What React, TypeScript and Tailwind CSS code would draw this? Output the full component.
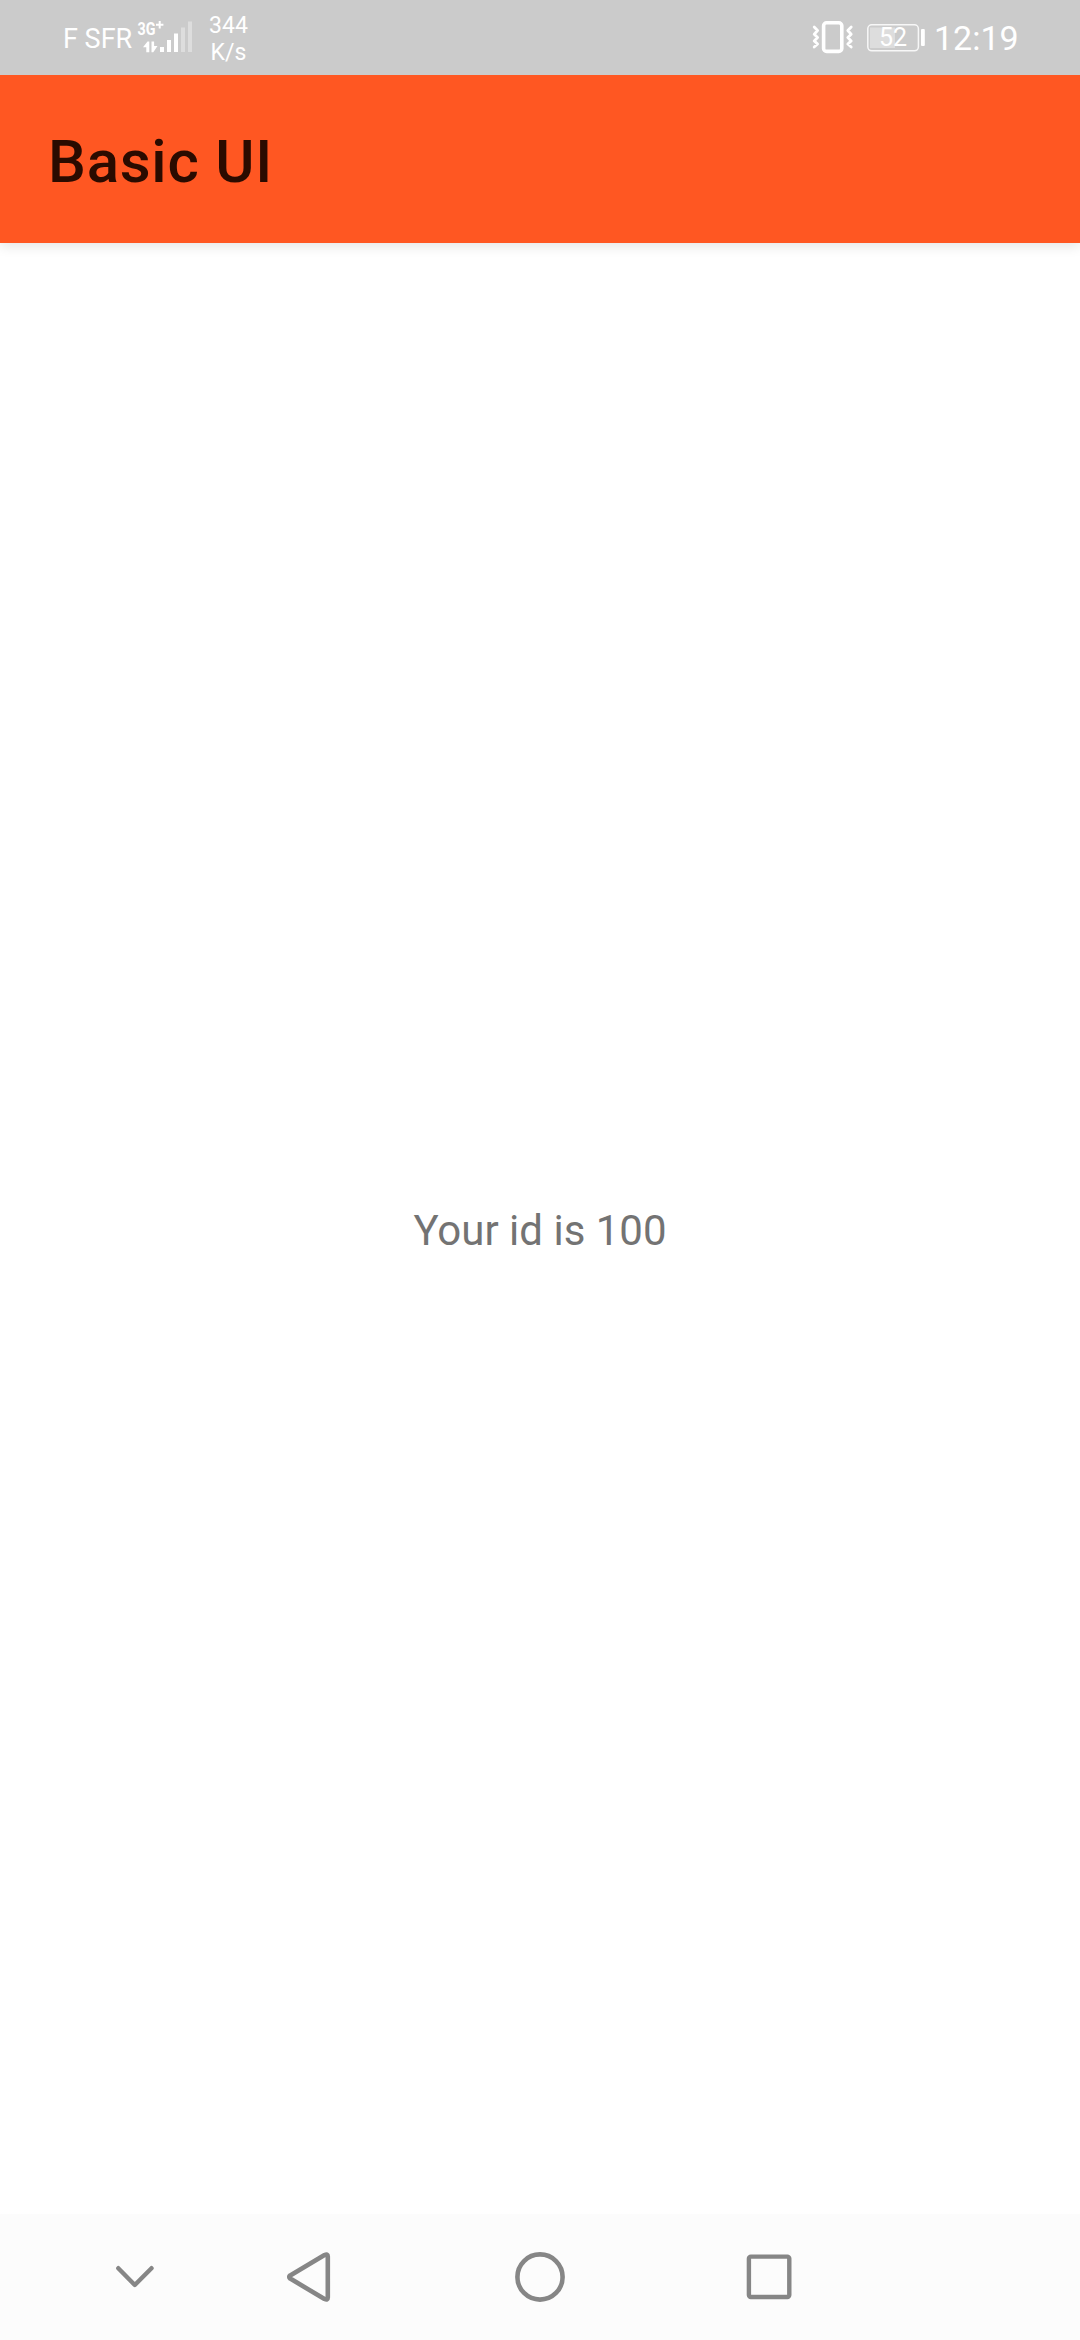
function CellularSignal() {
  return (
    <svg className="ml-[3px] h-[75px] w-[62px] shrink-0" viewBox="136 0 62 75" fill="#fff">
      <text x="137.5" y="35" fontFamily="Roboto, sans-serif" fontSize="18" fontWeight="700" textLength="18" lengthAdjust="spacingAndGlyphs">3G</text>
      <path d="M159.7 21v7.4M156 24.7h7.4" stroke="#fff" strokeWidth="2" />
      <path d="M149.3 41.5h-1.8l-4.5 5.8h3.3v5h3zM151.5 41.5h2.6v4.6h3.4l-4.2 6.2h-1.8z" />
      <path d="M160 47h4v5h-4zM167 40h4v12h-4zM174 33.5h4v18.5h-4z" />
      <path d="M181 27.5h4v24.5h-4zM188 21.5h4v30.5h-4z" fillOpacity=".35" />
    </svg>
  );
}

function VibrateIcon() {
  return (
    <svg className="h-[75px] w-[48px] shrink-0" viewBox="809 0 48 75" fill="none" stroke="#fff" strokeLinejoin="round" strokeLinecap="round">
      <rect x="823.6" y="22.8" width="18.2" height="28.6" rx="3" strokeWidth="3.6" />
      <path d="M814.2 27l3.4 3.5-3.4 3.7 3.4 3.3-3.4 3.4 3.4 3.1-3.4 3M851.2 27l-3.4 3.5 3.4 3.7-3.4 3.3 3.4 3.4-3.4 3.1 3.4 3" strokeWidth="2.8" />
    </svg>
  );
}

function Battery() {
  return (
    <svg className="ml-[8px] h-[75px] w-[64px] shrink-0" viewBox="865 0 64 75" fill="#fff">
      <rect x="867.8" y="24.8" width="50.6" height="26" rx="4" fill="none" stroke="#fff" strokeWidth="1.5" strokeOpacity=".85" />
      <rect x="870" y="27.5" width="25" height="20.5" fillOpacity=".35" />
      <text x="893" y="46" textAnchor="middle" fontFamily="Roboto, sans-serif" fontSize="25">52</text>
      <rect x="921" y="29" width="3.8" height="17" rx="1" />
    </svg>
  );
}

function StatusBar() {
  return (
    <header className="z-20 flex h-[75px] shrink-0 items-center bg-[#cbcbcb] pl-[63px] text-white">
      <span className="w-[70px] pt-[4px] text-[27px] leading-[71px] whitespace-nowrap">F SFR</span>
      <CellularSignal />
      <div className="flex w-[61px] flex-col items-center pt-[2px] text-center text-[23px] leading-[27px]">
        <span>344</span>
        <span>K/s</span>
      </div>
      <div className="ml-auto flex items-center">
        <VibrateIcon />
        <Battery />
        <span className="w-[151px] pt-[2px] pl-[5px] text-[34px] leading-[73px]">12:19</span>
      </div>
    </header>
  );
}

function NavigationBar() {
  return (
    <nav className="flex h-[126px] shrink-0 items-center bg-[#fcfcfc] text-[#868686]">
      <svg className="ml-[105px] h-[60px] w-[60px]" viewBox="105 2247 60 60" fill="none" stroke="currentColor" strokeWidth="4.4" strokeLinecap="round" strokeLinejoin="round">
        <path d="M118.3 2268.2l16.5 16.8 16.7-16.8" />
      </svg>
      <svg className="ml-[115px] h-[60px] w-[60px]" viewBox="280 2247 60 60" fill="none" stroke="currentColor" strokeWidth="4.6" strokeLinejoin="round">
        <path d="M290.2 2275.4Q288.2 2277 290.2 2278.6L324.5 2299Q327.8 2300.4 327.8 2297.5V2256.5Q327.8 2253.6 324.5 2255Z" />
      </svg>
      <svg className="ml-[170px] h-[60px] w-[60px]" viewBox="510 2247 60 60" fill="none" stroke="currentColor" strokeWidth="4.6">
        <circle cx="540" cy="2277" r="22.6" />
      </svg>
      <svg className="ml-[169px] h-[60px] w-[60px]" viewBox="739 2247 60 60" fill="none" stroke="currentColor" strokeWidth="4.4">
        <rect x="748.9" y="2256.6" width="40.4" height="40.4" rx="2" />
      </svg>
    </nav>
  );
}

export default function App() {
  return (
    <div className="flex h-[2340px] w-[1080px] flex-col overflow-hidden bg-white font-[Roboto,sans-serif]">
      <StatusBar />
      <div className="z-10 flex h-[168px] shrink-0 items-center bg-[#ff5722] pt-[6px] pl-[48px] shadow-[0_3px_12px_rgba(0,0,0,0.11)]">
        <h1 className="text-[60px] leading-[70px] font-medium tracking-[0.75px] text-[#2a0b00]">Basic UI</h1>
      </div>
      <main className="flex flex-1 items-center justify-center bg-white pt-[4px]">
        <p className="text-[42px] leading-[50px] text-[#737373]">Your id is 100</p>
      </main>
      <NavigationBar />
    </div>
  );
}
